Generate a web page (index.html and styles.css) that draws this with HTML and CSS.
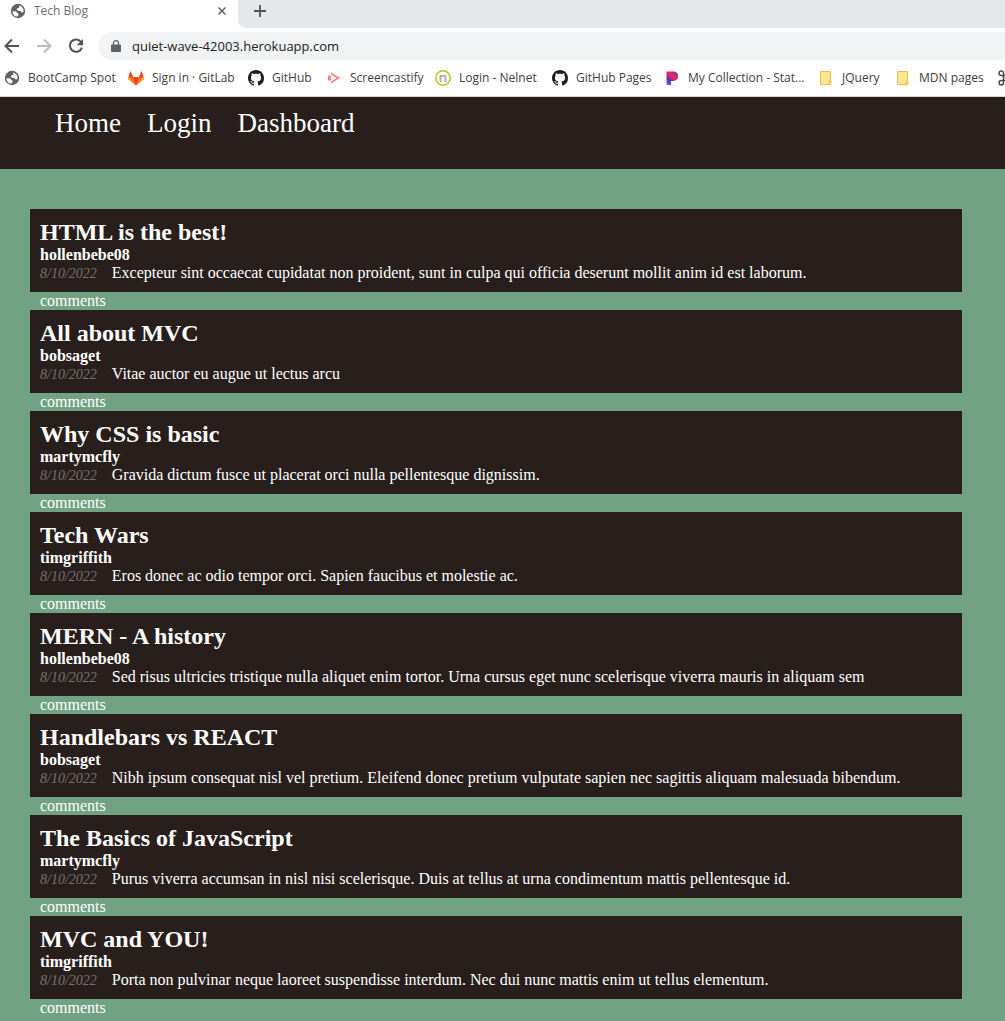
FILE: index.html
```html
<!DOCTYPE html>
<html lang="en">
<head>
<meta charset="utf-8">
<meta name="viewport" content="width=device-width, initial-scale=1">
<title>Tech Blog</title>
<link rel="stylesheet" href="styles.css">
</head>
<body>
<svg class="defs" aria-hidden="true">
  <symbol id="globe" viewBox="0 0 16 16"><circle cx="8" cy="8" r="7.2" fill="#5f6368"/><path d="M2.4 8.2l3.4.2c1 .2 1.300.8 1.300 1.600l1.100.3c.5.5.4 1.500 0 2.100l-.9 1.200C4.500 13.500 2.500 11 2.400 8.200zM8.800 2.500c1.800.2 3.300 1.300 4.100 2.800.6 1.200.8 2.400.6 3.700l-1.700.4-1.500-1.300-2.400-.3-1.300-1.300.8-1.300 1.700-.4.3-1.100z" fill="#fff"/></symbol>
  <symbol id="github" viewBox="0 0 16 16"><path fill="#1b1f23" d="M8 0C3.580 0 0 3.580 0 8c0 3.540 2.290 6.530 5.470 7.590.4.070.55-.17.55-.38 0-.19-.01-.82-.01-1.490-2.010.37-2.530-.49-2.690-.94-.09-.23-.48-.94-.82-1.130-.28-.15-.68-.52-.01-.53.63-.01 1.080.58 1.230.82.72 1.210 1.870.87 2.330.66.070-.52.28-.87.51-1.070-1.780-.2-3.640-.89-3.640-3.950 0-.87.31-1.590.82-2.150-.08-.2-.36-1.020.08-2.120 0 0 .67-.21 2.200.82.64-.18 1.320-.27 2-.27s1.360.09 2 .27c1.530-1.040 2.200-.82 2.200-.82.44 1.100.16 1.920.08 2.120.51.56.82 1.270.82 2.150 0 3.070-1.870 3.750-3.650 3.950.29.25.54.73.54 1.480 0 1.070-.01 1.930-.01 2.200 0 .21.15.46.55.38A8.010 8.010 0 0 0 16 8c0-4.420-3.580-8-8-8z"/></symbol>
  <symbol id="note" viewBox="0 0 16 16"><path d="M2.500 1.500h10v13h-10z" fill="#ffe697" stroke="#e8c13f"/><path d="M11 14.500v-3.500h2v3.500z" fill="#ffe697" stroke="#e8c13f"/></symbol>
</svg>

<div class="browser">
  <div class="tabs">
    <div class="tab">
      <svg class="icon" aria-hidden="true"><use href="#globe"/></svg>
      <span class="tab-title">Tech Blog</span>
      <button class="plain" aria-label="Close tab"><svg class="close" viewBox="0 0 10 10"><path d="M1.500 1.500l7 7M8.500 1.500l-7 7" stroke="#5f6368" stroke-width="1.500"/></svg></button>
    </div>
    <div class="strip">
      <button class="plain" aria-label="New tab"><svg class="plus" viewBox="0 0 14 14"><path d="M7 1v12M1 7h12" stroke="#50545a" stroke-width="1.800"/></svg></button>
    </div>
  </div>
  <div class="toolbar">
    <button class="plain" aria-label="Back"><svg class="icon" viewBox="0 0 16 16"><path d="M15 8H2M8 1.500L1.500 8 8 14.500" fill="none" stroke="#50545a" stroke-width="2"/></svg></button>
    <button class="plain" aria-label="Forward"><svg class="icon" viewBox="0 0 16 16"><path d="M1 8h13M8 1.500L14.500 8 8 14.500" fill="none" stroke="#babcbe" stroke-width="2"/></svg></button>
    <button class="plain" aria-label="Reload"><svg class="icon" viewBox="0 0 16 16"><path d="M13.300 4.200A6.200 6.200 0 1 0 14 9.600" fill="none" stroke="#50545a" stroke-width="2"/><path d="M15 1v6.300H8.700z" fill="#50545a"/></svg></button>
    <div class="address">
      <svg class="lock" viewBox="0 0 10 12"><path d="M1 4.500h8a1 1 0 0 1 1 1V11a1 1 0 0 1-1 1H1a1 1 0 0 1-1-1V5.500a1 1 0 0 1 1-1z" fill="#5f6368"/><path d="M2.500 5V3a2.500 2.300 0 0 1 5 0v2" fill="none" stroke="#5f6368" stroke-width="1.300"/></svg>
      <input type="text" aria-label="Address" value="quiet-wave-42003.herokuapp.com">
    </div>
  </div>
  <nav class="bookmarks" aria-label="Bookmarks">
    <a href="#"><svg class="icon"><use href="#globe"/></svg>BootCamp Spot</a>
    <a href="#"><svg class="icon" viewBox="0 0 16 16"><path d="M0 9L2.500 1 5 7h6l2.500-6L16 9l-8 6.500z" fill="#fc6d26"/><path d="M5 7h6l-3 8.500z" fill="#e24329"/><path d="M2.500 1L5 7H.700zM13.500 1L11 7h4.300z" fill="#e24329"/><path d="M.7 7L0 9l8 6.500zM15.300 7l.7 2-8 6.500z" fill="#fca326"/></svg>Sign in · GitLab</a>
    <a href="#"><svg class="icon"><use href="#github"/></svg>GitHub</a>
    <a href="#"><svg class="icon" viewBox="0 0 16 16"><path d="M2 5.500h3v5H2z" fill="#ff8085"/><path d="M6 5V4l6.500 4L6 12v-1" fill="none" stroke="#ff8085" stroke-width="1.800"/></svg>Screencastify</a>
    <a href="#"><svg class="icon" viewBox="0 0 16 16"><circle cx="8" cy="8" r="7.200" fill="#fff" stroke="#b5c51a" stroke-width="1.500"/><path d="M5.500 12V5M5.500 7.500c0-2.500 5-2.500 5 0V12" fill="none" stroke="#aaa9ad" stroke-width="1.900"/></svg>Login - Nelnet</a>
    <a href="#"><svg class="icon"><use href="#github"/></svg>GitHub Pages</a>
    <a href="#"><svg class="icon" viewBox="0 0 16 16"><defs><linearGradient id="pg" x1="0" y1="1" x2=".7" y2="0"><stop offset="0" stop-color="#6b78f5"/><stop offset=".35" stop-color="#4b36c9"/><stop offset=".6" stop-color="#e5265f"/><stop offset=".8" stop-color="#e5265f"/><stop offset="1" stop-color="#4a38d0"/></linearGradient></defs><path d="M2.500 1.500h7a4.500 4.500 0 0 1 0 9.500H7v4H2.500z" fill="url(#pg)"/></svg>My Collection - Stat...</a>
    <a href="#"><svg class="icon"><use href="#note"/></svg>JQuery</a>
    <a href="#"><svg class="icon"><use href="#note"/></svg>MDN pages</a>
    <a href="#" aria-label="Shortcut"><svg class="icon" viewBox="0 0 16 16"><path d="M5.500 5.500h5v5h-5zM5.500 5.500H3.300a2.200 2.200 0 1 1 2.200-2.200zM10.500 5.500V3.300a2.200 2.200 0 1 1 2.200 2.200zM5.500 10.500v2.200a2.200 2.200 0 1 1-2.200-2.200zM10.500 10.500h2.200a2.200 2.200 0 1 1-2.200 2.200z" fill="none" stroke="#45484d" stroke-width="1.500"/></svg></a>
  </nav>
</div>

<header class="site-header">
  <nav class="site-nav">
    <a href="#">Home</a>
    <a href="#">Login</a>
    <a href="#">Dashboard</a>
  </nav>
</header>

<main class="posts">
  <article><div class="post"><h2>HTML is the best!</h2><h3>hollenbebe08</h3><p><time>8/10/2022</time>Excepteur sint occaecat cupidatat non proident, sunt in culpa qui officia deserunt mollit anim id est laborum.</p></div><a class="comments" href="#">comments</a></article>
  <article><div class="post"><h2>All about MVC</h2><h3>bobsaget</h3><p><time>8/10/2022</time>Vitae auctor eu augue ut lectus arcu</p></div><a class="comments" href="#">comments</a></article>
  <article><div class="post"><h2>Why CSS is basic</h2><h3>martymcfly</h3><p><time>8/10/2022</time>Gravida dictum fusce ut placerat orci nulla pellentesque dignissim.</p></div><a class="comments" href="#">comments</a></article>
  <article><div class="post"><h2>Tech Wars</h2><h3>timgriffith</h3><p><time>8/10/2022</time>Eros donec ac odio tempor orci. Sapien faucibus et molestie ac.</p></div><a class="comments" href="#">comments</a></article>
  <article><div class="post"><h2>MERN - A history</h2><h3>hollenbebe08</h3><p><time>8/10/2022</time>Sed risus ultricies tristique nulla aliquet enim tortor. Urna cursus eget nunc scelerisque viverra mauris in aliquam sem</p></div><a class="comments" href="#">comments</a></article>
  <article><div class="post"><h2>Handlebars vs REACT</h2><h3>bobsaget</h3><p><time>8/10/2022</time>Nibh ipsum consequat nisl vel pretium. Eleifend donec pretium vulputate sapien nec sagittis aliquam malesuada bibendum.</p></div><a class="comments" href="#">comments</a></article>
  <article><div class="post"><h2>The Basics of JavaScript</h2><h3>martymcfly</h3><p><time>8/10/2022</time>Purus viverra accumsan in nisl nisi scelerisque. Duis at tellus at urna condimentum mattis pellentesque id.</p></div><a class="comments" href="#">comments</a></article>
  <article><div class="post"><h2>MVC and YOU!</h2><h3>timgriffith</h3><p><time>8/10/2022</time>Porta non pulvinar neque laoreet suspendisse interdum. Nec dui nunc mattis enim ut tellus elementum.</p></div><a class="comments" href="#">comments</a></article>
</main>
</body>
</html>
```
FILE: styles.css
```css
* {
  box-sizing: border-box;
  margin: 0;
  padding: 0;
}

body {
  background: #71a284;
  font-family: "Liberation Serif", "Times New Roman", serif;
  font-size: 16px;
  line-height: 18px;
  color: #fff;
}

a {
  color: inherit;
  text-decoration: none;
}

svg {
  display: block;
  flex: none;
}

.defs {
  position: absolute;
  width: 0;
  height: 0;
}

.icon {
  width: 16px;
  height: 16px;
}

.plain {
  border: 0;
  background: none;
}

/* Browser chrome */
.browser {
  background: #fff;
  border-bottom: 1px solid #d5d7da;
  font-family: "Open Sans", "Noto Sans", sans-serif;
  font-size: 12px;
  color: #3c4043;
  overflow: hidden;
}

.tabs {
  display: flex;
  height: 28px;
}

.tab {
  display: flex;
  align-items: center;
  gap: 8px;
  width: 238px;
  padding: 0 11px 6px 10px;
  color: #6b6e72;
}

.tab-title {
  flex: 1;
}

.close {
  width: 10px;
  height: 10px;
}

.strip {
  display: flex;
  flex: 1;
  align-items: center;
  padding: 0 15px 6px;
  background: #e5e8eb;
  border-bottom-left-radius: 8px;
}

.plus {
  width: 14px;
  height: 14px;
}

.toolbar {
  display: flex;
  align-items: center;
  gap: 16px;
  height: 36px;
  padding-left: 4px;
}

.address {
  display: flex;
  flex: 1;
  align-items: center;
  gap: 11px;
  height: 28px;
  margin-left: -2px;
  padding-left: 13px;
  background: #f1f3f4;
  border-radius: 14px 0 0 14px;
}

.lock {
  width: 10px;
  height: 12px;
}

.address input {
  flex: 1;
  border: 0;
  background: none;
  font: 13px/20px "Open Sans", "Noto Sans", sans-serif;
  color: #202124;
}

.bookmarks {
  display: grid;
  grid-template-columns: 124px 120px 78px 109px 117px 112px 154px 77px 103px 16px;
  height: 32px;
  padding: 0 0 4px 4px;
}

.bookmarks a {
  display: flex;
  align-items: center;
  gap: 8px;
  white-space: nowrap;
}

/* Site */
.site-header {
  height: 72px;
  padding: 10px 55px;
  background: #281f1d;
}

.site-nav {
  display: flex;
  gap: 26px;
  font-size: 27px;
  line-height: 32px;
}

.posts {
  padding: 40px 43px 0 30px;
}

.post {
  padding: 10px;
  background: #281f1d;
}

.post h2 {
  font-size: 24px;
  line-height: 27px;
}

.post h3 {
  font-size: 16px;
  line-height: 18px;
}

.post p {
  display: flex;
  align-items: baseline;
  gap: 15px;
}

.post time {
  font-size: 14px;
  line-height: 16px;
  font-style: italic;
  color: #77716f;
}

.comments {
  display: block;
  width: fit-content;
  margin-left: 10px;
}
```
